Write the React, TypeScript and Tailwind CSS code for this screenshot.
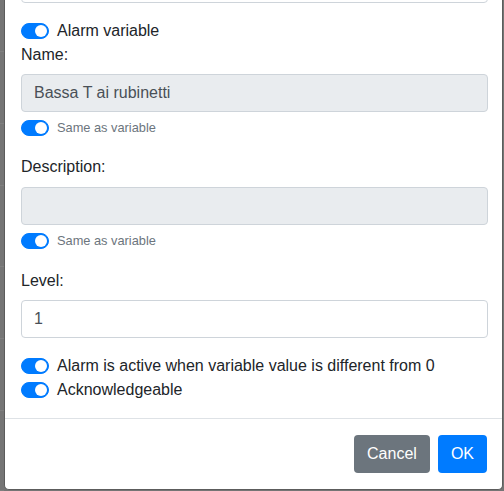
import React from 'react';

function Toggle() {
    return (
        <span className="flex h-4 w-7 shrink-0 items-center justify-end rounded-full border border-[#007bff] bg-[#007bff] pr-[1px]">
            <span className="h-3 w-3 rounded-full bg-white" />
        </span>
    );
}

function SwitchRow({ label, small }: { label: string; small?: boolean }) {
    return (
        <div className="flex h-6 items-center gap-2">
            <Toggle />
            <span
                className={
                    small
                        ? 'text-[12.8px] leading-none text-[#6c757d]'
                        : 'text-[16px] leading-none text-[#212529]'
                }
            >
                {label}
            </span>
        </div>
    );
}

const backdropRows = [52, 72, 62, 81, 72, 72, 80];

export default function App() {
    return (
        <div className="flex h-[491px] w-[504px] overflow-hidden bg-[#757575] font-['Liberation_Sans',Arial,sans-serif]">
            <div className="flex w-[4px] shrink-0 flex-col">
                {backdropRows.map((h, i) => (
                    <div
                        key={i}
                        className="shrink-0 border-b border-[#7f7f7f]"
                        style={{ height: h }}
                    />
                ))}
            </div>

            <div className="flex h-[490px] w-[499px] shrink-0 flex-col overflow-hidden rounded-b-[5px] border border-t-0 border-[#5c5c5c] bg-white">
                <div className="flex flex-col pb-4 pl-4 pr-[14px]">
                    <div className="-mt-[35px] h-[38px] shrink-0 rounded border border-[#ced4da] bg-white" />

                    <div className="mt-4">
                        <SwitchRow label="Alarm variable" />
                    </div>

                    <label className="h-6 text-[16px] leading-6 text-[#212529]">
                        Name:
                    </label>
                    <div className="mt-[7px] flex h-[38px] items-center rounded border border-[#ced4da] bg-[#e9ecef] px-3 text-[16px] text-[#495057]">
                        Bassa T ai rubinetti
                    </div>
                    <div className="mt-1">
                        <SwitchRow label="Same as variable" small />
                    </div>

                    <label className="mt-[15px] h-6 text-[16px] leading-6 text-[#212529]">
                        Description:
                    </label>
                    <div className="mt-2 h-[38px] rounded border border-[#ced4da] bg-[#e9ecef]" />
                    <div className="mt-1">
                        <SwitchRow label="Same as variable" small />
                    </div>

                    <label className="mt-4 h-6 text-[16px] leading-6 text-[#212529]">
                        Level:
                    </label>
                    <div className="mt-[7px] flex h-[38px] items-center rounded border border-[#ced4da] bg-white px-3 text-[16px] text-[#495057]">
                        1
                    </div>

                    <div className="mt-4">
                        <SwitchRow label="Alarm is active when variable value is different from 0" />
                    </div>
                    <SwitchRow label="Acknowledgeable" />
                </div>

                <div className="flex justify-end gap-2 border-t border-[#dee2e6] pb-4 pl-4 pr-[15px] pt-4">
                    <button className="h-[38px] rounded bg-[#6c757d] px-[13px] text-[16px] text-white">
                        Cancel
                    </button>
                    <button className="h-[38px] rounded bg-[#007bff] px-[13px] text-[16px] text-white">
                        OK
                    </button>
                </div>
            </div>
        </div>
    );
}
